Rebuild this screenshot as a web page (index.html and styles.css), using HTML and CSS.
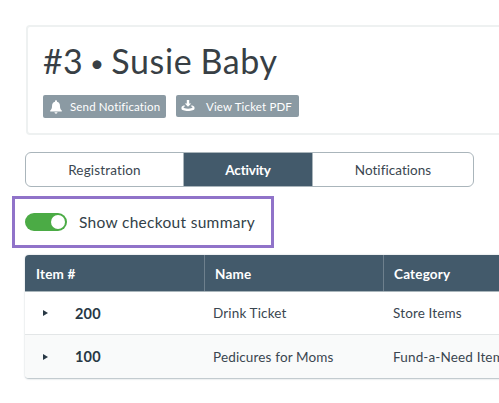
FILE: index.html
```html
<!DOCTYPE html>
<html lang="en">
<head>
<meta charset="utf-8">
<title>Ticket #3</title>
<link rel="stylesheet" href="styles.css">
</head>
<body>
<main class="page">
  <section class="card">
    <h1 class="title">#3 <span class="dot">•</span> <span class="name">Susie Baby</span></h1>
    <div class="actions">
      <button class="btn btn-send">
        <svg class="ico" viewBox="0 0 14 14" width="14" height="14"><path fill="#fff" d="M7 0.200c.6 0 1 .4 1 1v.6c2 .5 3 2.200 3 4.400 0 2 .6 3.300 1.800 4.300v.9H1.200v-.9C2.400 9.500 3 8.200 3 6.200 3 4 4 2.300 6 1.800v-.6c0-.6.400-1 1-1zM5.500 12.300h3c0 .8-.7 1.400-1.500 1.400s-1.500-.6-1.500-1.400z"/></svg>
        <span>Send Notification</span>
      </button>
      <button class="btn btn-pdf">
        <svg class="ico" viewBox="0 0 14 14" width="14" height="14"><path fill="#fff" d="M5.800 1h2.400v3.400h2L7 7.800 3.800 4.400h2z"/><path fill="#fff" d="M3.200 6.200l1 1C3 7.500 2.500 7.900 2.500 8.300c0 .8 2 1.400 4.500 1.400s4.500-.6 4.500-1.400c0-.4-.5-.8-1.700-1.100l1-1C12.400 6.700 13.500 7.400 13.500 8.600v1.200c0 1.300-2.900 2.200-6.500 2.200S.5 11.100.5 9.800V8.600c0-1.200 1.100-1.900 2.700-2.400z"/></svg>
        <span>View Ticket PDF</span>
      </button>
    </div>
  </section>

  <nav class="tabs">
    <a class="tab tab-reg">Registration</a>
    <a class="tab tab-act">Activity</a>
    <a class="tab tab-not">Notifications</a>
  </nav>

  <div class="summary">
    <span class="toggle"><span class="knob"></span></span>
    <span class="summary-label">Show checkout summary</span>
  </div>

  <div class="table">
    <div class="row head">
      <div class="cell c1">Item #</div>
      <div class="cell c2">Name</div>
      <div class="cell c3">Category</div>
    </div>
    <div class="row">
      <div class="cell c1"><span class="caret"></span><b>200</b></div>
      <div class="cell c2">Drink Ticket</div>
      <div class="cell c3">Store Items</div>
    </div>
    <div class="row alt">
      <div class="cell c1"><span class="caret"></span><b>100</b></div>
      <div class="cell c2">Pedicures for Moms</div>
      <div class="cell c3">Fund-a-Need Item</div>
    </div>
  </div>
</main>
</body>
</html>
```
FILE: styles.css
```css
* { box-sizing: border-box; }
html, body { margin: 0; height: 100%; overflow: hidden; background: #fff; }
body { font-family: "Lato", "Open Sans", sans-serif; color: #333f48; }
.page { width: 499px; height: 403px; padding: 25px 0 0 25px; overflow: hidden; }

.card {
  width: 560px; height: 110px; margin-left: 1px;
  border: 2px solid #eef1f1; border-radius: 4px;
  padding: 14px 0 0 15px;
}
.title { margin: 0; font-size: 34px; line-height: 40px; font-weight: 400; color: #383f45; letter-spacing: .3px; word-spacing: -1px; }
.name { letter-spacing: .6px; }
.dot { font-size: 24px; vertical-align: 2px; margin: 0 -1px; }
.actions { display: flex; gap: 10px; margin-top: 12px; }
.btn {
  display: flex; align-items: center; height: 23px;
  background: #8b9aa3; color: #fff; border: 0; border-radius: 2px;
  font: 400 11.500px "Lato", sans-serif; padding: 0; letter-spacing: .15px;
}
.btn-send { width: 123px; padding-left: 6px; }
.btn-send span { margin-left: 7px; }
.btn-pdf { width: 123px; height: 22px; padding-left: 5px; }
.btn-pdf span { margin-left: 11px; }
.ico { flex: none; }

.tabs {
  display: flex; width: 449px; height: 35px; margin-top: 17px;
  border: 1px solid #aab5bb; border-radius: 6px; overflow: hidden;
  font-size: 13.500px;
}
.tab { display: flex; align-items: center; justify-content: center; color: #3a4650; letter-spacing: .15px; }
.tab-reg { width: 157px; }
.tab-act { width: 130px; background: #435a6b; color: #fff; border: solid #aab5bb; border-width: 0 1px; font-weight: 700; letter-spacing: -.2px; }
.tab-not { flex: 1; letter-spacing: .05px; }

.summary {
  display: flex; align-items: center; width: 262px; height: 52px;
  margin: 9px 0 0 -13px; padding-left: 10px;
  border: 3px solid #9073c9;
}
.toggle { position: relative; width: 42px; height: 18px; border-radius: 9px; background: #4bab45; }
.knob { position: absolute; right: 2px; top: 2px; width: 14px; height: 14px; border-radius: 50%; background: #fff; }
.summary-label { margin-left: 12px; font-size: 15.500px; color: #333f48; letter-spacing: .3px; }

.table {
  width: 560px; margin-top: 7px;
  border-radius: 4px; overflow: hidden;
  border-bottom: 1px solid #c3cbcf;
  box-shadow: 0 0 2px #c3cbcf;
}
.row { display: flex; height: 43px; background: #fff; border-bottom: 1px solid #e3e6e7; font-size: 13.500px; color: #3a4650; }
.row:last-child { border-bottom: 0; }
.row.alt { background: #f9fafa; }
.row.head { height: 37px; background: #435a6b; color: #fff; font-weight: 700; border-bottom: 1px solid #a9b5bb; }
.cell { display: flex; align-items: center; width: 179px; padding-left: 8px; letter-spacing: .15px; }
.c1 { width: 180px; }
.head .cell { padding: 1px 0 0 10px; border-right: 1px solid #6e808d; letter-spacing: .2px; }
.head .c1 { padding-left: 11px; }
.c3 { flex: 1; padding-left: 9px; }
.c1 b { font-size: 14.500px; font-weight: 700; color: #283844; letter-spacing: .2px; }
.row:not(.head) .c1 { padding-left: 18px; }
.caret { width: 0; height: 0; margin-right: 27px; border-left: 5px solid #283844; border-top: 3px solid transparent; border-bottom: 3px solid transparent; }
```
